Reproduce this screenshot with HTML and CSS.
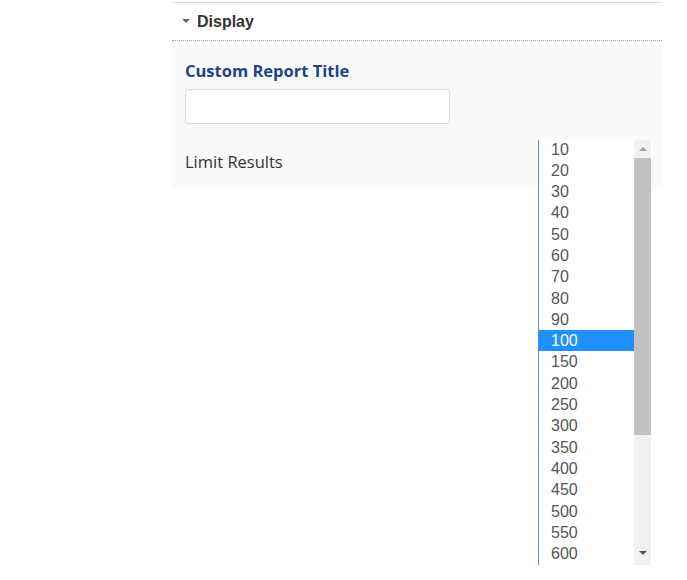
FILE: index.html
```html
<!DOCTYPE html>
<html>
<head>
<meta charset="utf-8">
<link rel="stylesheet" href="styles.css">
</head>
<body>
<div class="panel">
  <div class="panel-header">
    <span class="caret"></span>
    <span class="panel-title">Display</span>
  </div>
  <div class="panel-body">
    <label class="field-label">Custom Report Title</label>
    <input class="text-input" type="text">
    <div class="limit-label">Limit Results</div>
  </div>
</div>
<div class="listbox">
  <ul class="options">
    <li>10</li><li>20</li><li>30</li><li>40</li><li>50</li>
    <li>60</li><li>70</li><li>80</li><li>90</li><li class="selected">100</li>
    <li>150</li><li>200</li><li>250</li><li>300</li><li>350</li>
    <li>400</li><li>450</li><li>500</li><li>550</li><li>600</li>
  </ul>
  <div class="scrollbar">
    <div class="arrow-up"></div>
    <div class="track"><div class="thumb"></div></div>
    <div class="arrow-down"></div>
  </div>
</div>
</body>
</html>
```
FILE: styles.css
```css
html, body {
  margin: 0;
  padding: 0;
  background: #ffffff;
}
body {
  width: 687px;
  height: 580px;
  overflow: hidden;
  position: relative;
  font-family: "Open Sans", sans-serif;
}
.panel {
  margin: 2px 0 0 172px;
  width: 490px;
  border-top: 1px solid #dcdcdc;
}
.panel-header {
  display: flex;
  align-items: center;
  padding-left: 10px;
  border-bottom: 1px dotted #a8a8a8;
  box-sizing: border-box;
  height: 38px;
}
.caret {
  width: 0;
  height: 0;
  border-left: 4px solid transparent;
  border-right: 4px solid transparent;
  border-top: 4px solid #666;
  margin-right: 7px;
  margin-top: -1px;
}
.panel-title {
  font-family: "Liberation Sans", Arial, sans-serif;
  font-weight: bold;
  font-size: 16px;
  color: #333;
}
.panel-body {
  background: #fafafa;
  padding: 20px 13px 14px;
  height: 146px;
  box-sizing: border-box;
}
.field-label {
  display: block;
  font-weight: bold;
  font-size: 16.5px;
  line-height: 22px;
  color: #1b448a;
  margin-top: -1px;
}
.text-input {
  display: block;
  margin-top: 7px;
  width: 265px;
  height: 35px;
  box-sizing: border-box;
  border: 1px solid #dadada;
  border-radius: 3px;
  background: #fff;
  outline: none;
}
.limit-label {
  margin-top: 27px;
  font-size: 16.5px;
  line-height: 22px;
  color: #333;
}
.listbox {
  position: absolute;
  left: 538px;
  top: 140px;
  width: 114px;
  height: 425px;
  border-left: 1px solid #5a8ad8;
  box-sizing: border-box;
  background: #fff;
  overflow: hidden;
  display: flex;
}
.options {
  list-style: none;
  margin: -1.5px 0 0 0;
  padding: 0;
  width: 95px;
  font-family: "Liberation Sans", Arial, sans-serif;
  font-size: 16px;
  color: #555;
}
.options li {
  height: 21.3px;
  line-height: 21.3px;
  padding-left: 12px;
}
.options li.selected {
  background: #1e90ff;
  color: #fff;
}
.scrollbar {
  width: 17px;
  height: 100%;
  background: #f1f1f1;
  display: flex;
  flex-direction: column;
}
.arrow-up, .arrow-down {
  height: 17px;
  display: flex;
  align-items: center;
  justify-content: center;
  flex: none;
}
.arrow-down {
  height: 20px;
  align-items: flex-start;
  padding-top: 6px;
  box-sizing: border-box;
}
.arrow-up::before {
  content: "";
  border-left: 4px solid transparent;
  border-right: 4px solid transparent;
  border-bottom: 4px solid #a3a3a3;
}
.arrow-down::before {
  content: "";
  border-left: 4px solid transparent;
  border-right: 4px solid transparent;
  border-top: 4px solid #505050;
}
.track {
  flex: 1;
}
.thumb {
  margin-top: 1px;
  height: 277px;
  background: #c1c1c1;
}
```
